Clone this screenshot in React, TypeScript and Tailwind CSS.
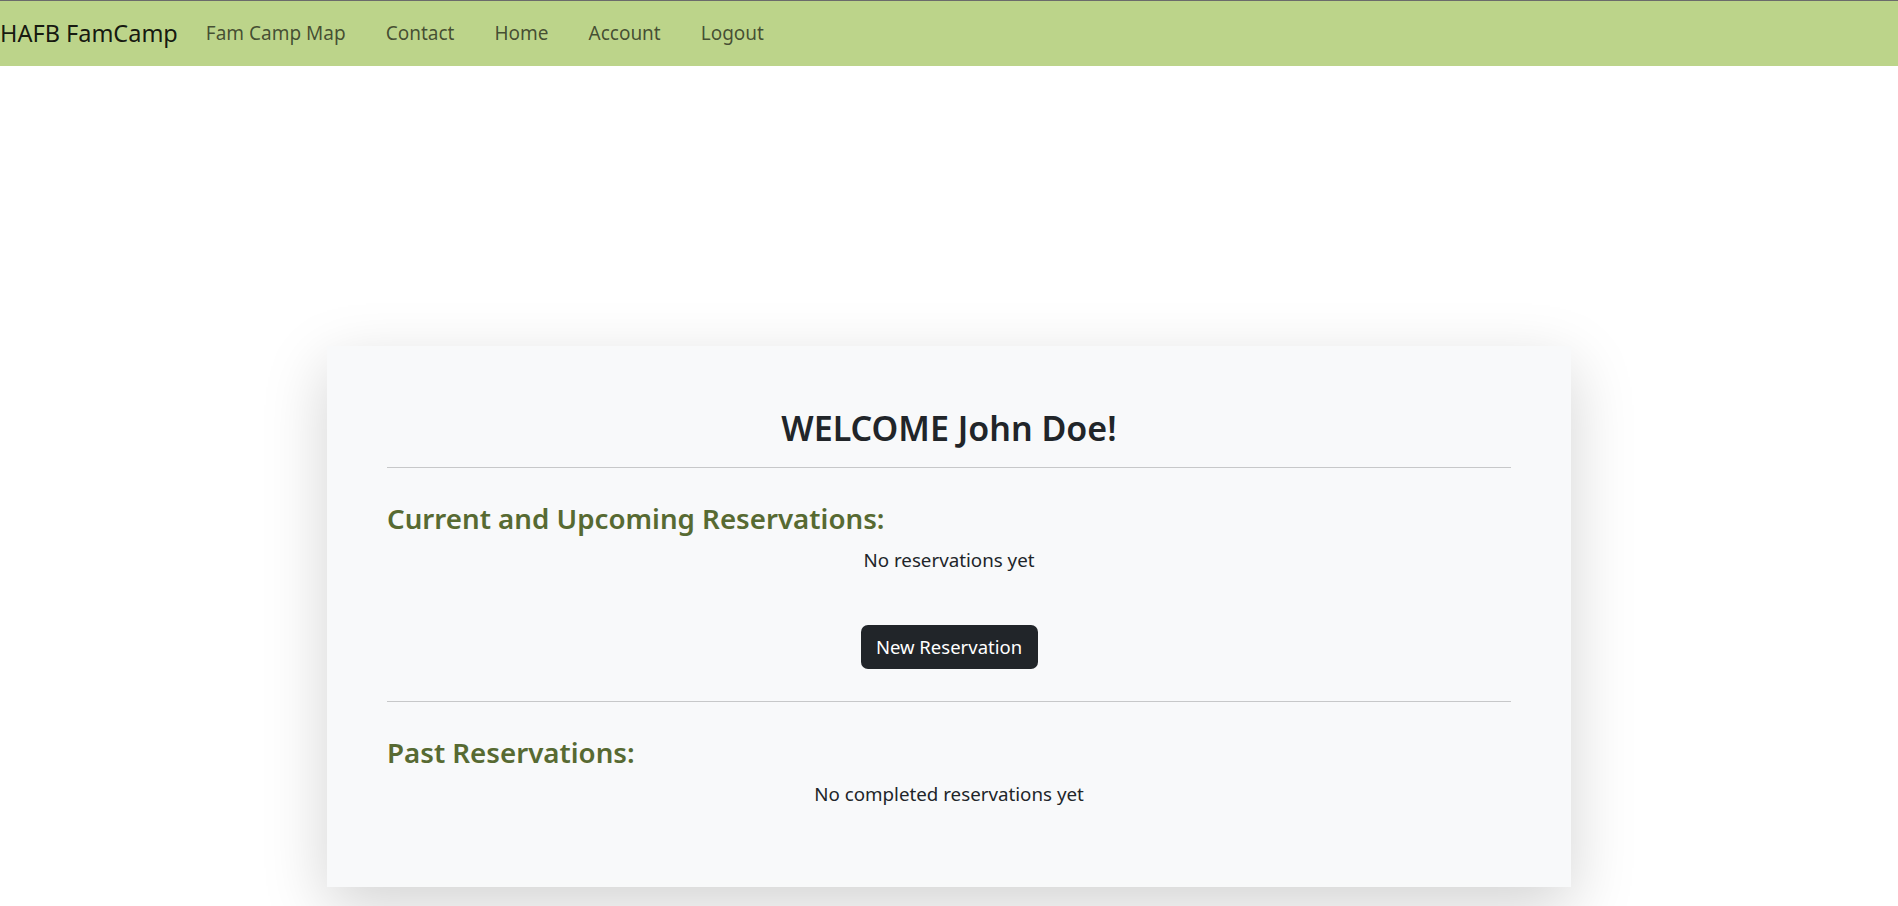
import React from 'react';

const navLinks = ['Fam Camp Map', 'Contact', 'Home', 'Account', 'Logout'];

const App: React.FC = () => {
  return (
    <div className="min-h-screen bg-white font-['Noto_Sans',sans-serif] text-[#212529]">
      {/* Navbar */}
      <nav className="h-[66px] bg-[#bcd48a] border-t border-[#6b6b6b] flex items-center">
        <a className="text-[23.5px] text-black/90 mr-[28px] leading-none">HAFB FamCamp</a>
        <ul className="flex items-center gap-[40px]">
          {navLinks.map(link => (
            <li key={link} className="text-[19px] text-black/65 leading-none">{link}</li>
          ))}
        </ul>
      </nav>

      {/* Reservations card */}
      <div className="w-[1244px] mx-auto mt-[280px] bg-[#f8f9fa] shadow-[0_20px_60px_rgba(0,0,0,0.175)] px-[60px] pt-[58px] pb-[79px]">
        <h2 className="text-center text-[34px] font-semibold leading-[48px] h-[48px]">WELCOME John Doe!</h2>
        <hr className="mt-[15px] border-t border-[#c7c8c9]" />

        <h3 className="mt-[32px] text-[27.7px] font-semibold text-[#576a32] leading-[36px]">Current and Upcoming Reservations:</h3>
        <p className="mt-[10px] text-center text-[18.75px] leading-[28px]">No reservations yet</p>
        <div className="mt-[51px] flex justify-center">
          <button className="h-[44px] w-[177px] rounded-[7px] bg-[#212529] text-white text-[18.5px]">New Reservation</button>
        </div>
        <hr className="mt-[32px] border-t border-[#c7c8c9]" />

        <h3 className="mt-[32px] text-[27.7px] font-semibold text-[#576a32] leading-[36px]">Past Reservations:</h3>
        <p className="mt-[10px] text-center text-[18.75px] leading-[28px]">No completed reservations yet</p>
      </div>
    </div>
  );
};

export default App;
